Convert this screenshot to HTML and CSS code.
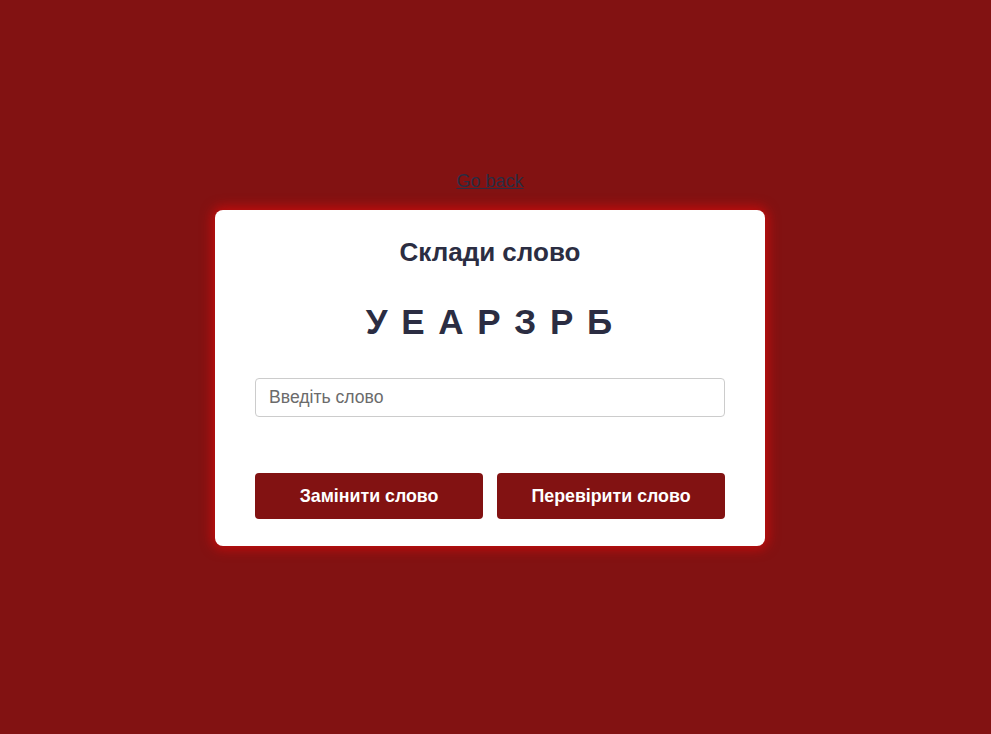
FILE: index.html
```html
<!DOCTYPE html>
<html lang="uk">
<head>
<meta charset="utf-8">
<title>Склади слово</title>
<link rel="stylesheet" href="styles.css">
</head>
<body>
<main class="page">
  <a class="back" href="#">Go back</a>
  <section class="card">
    <h2 class="title">Склади слово</h2>
    <div class="letters">У Е А Р З Р Б</div>
    <input class="word-input" type="text" placeholder="Введіть слово">
    <div class="actions">
      <button class="btn">Замінити слово</button>
      <button class="btn">Перевірити слово</button>
    </div>
  </section>
</main>
</body>
</html>
```
FILE: styles.css
```css
html, body {
  margin: 0;
  padding: 0;
}
body {
  background: #821212;
  font-family: "Liberation Sans", Arial, sans-serif;
  color: #2b2d42;
  min-height: 100vh;
}
.page {
  display: flex;
  flex-direction: column;
  align-items: center;
  padding-top: 171px;
  padding-right: 11px;
}
.back {
  color: #2b2d42;
  font-size: 18px;
  line-height: 20px;
  text-decoration: underline;
  margin-bottom: 19px;
}
.card {
  box-sizing: border-box;
  width: 550px;
  background: #fff;
  border-radius: 8px;
  padding: 27px 40px 27px;
  box-shadow: 0 0 12px 3px #c40c0c;
  display: flex;
  flex-direction: column;
  align-items: stretch;
}
.title {
  margin: 0;
  text-align: center;
  font-size: 26px;
  line-height: 30px;
  font-weight: bold;
}
.letters {
  margin-top: 35px;
  text-align: center;
  font-size: 35px;
  line-height: 40px;
  font-weight: bold;
  letter-spacing: 2px;
}
.word-input {
  margin-top: 36px;
  box-sizing: border-box;
  height: 39px;
  border: 1px solid #ccc;
  border-radius: 4px;
  padding: 0 13px;
  font-family: "Liberation Sans", Arial, sans-serif;
  font-size: 17.6px;
  color: #2b2d42;
  outline: none;
}
.word-input::placeholder {
  color: #6b6b6b;
}
.actions {
  margin-top: 56px;
  display: flex;
  gap: 14px;
}
.btn {
  flex: 1;
  height: 46px;
  border: none;
  border-radius: 4px;
  background: #821212;
  color: #fff;
  font-family: "Liberation Sans", Arial, sans-serif;
  font-weight: bold;
  font-size: 17.8px;
  cursor: pointer;
}
```
